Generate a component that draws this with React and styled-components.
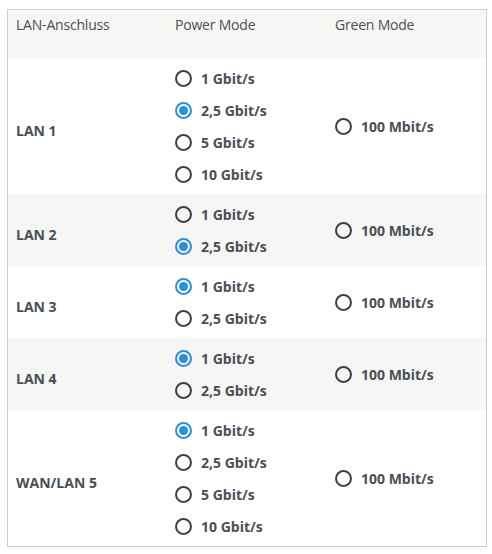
import React from 'react';
import styled, { createGlobalStyle } from 'styled-components';

const GlobalStyle = createGlobalStyle`
    body {
        margin: 0;
        background: #ffffff;
        font-family: "Open Sans", "Liberation Sans", sans-serif;
        color: #4a4f55;
    }
`;

const Page = styled.div`
    padding: 9px 5px 0 7px;
`;

const Table = styled.div`
    width: 478px;
    border: 1px solid #c3d0da;
`;

const Row = styled.div`
    display: grid;
    grid-template-columns: 159px 160px 1fr;
    align-items: center;
    padding: 4px 0 4px 8px;
    background: ${p => (p.$shaded ? '#f6f6f4' : '#ffffff')};
`;

const HeadRow = styled(Row)`
    align-items: start;
    height: 48px;
    box-sizing: border-box;
    padding-top: 5px;
`;

const HeadCell = styled.div`
    font-size: 14px;
    line-height: 20px;
    letter-spacing: -0.2px;
`;

const PortName = styled.div`
    font-size: 14px;
    font-weight: 700;
    padding-top: 8px;
`;

const Options = styled.div`
    display: flex;
    flex-direction: column;
`;

const Option = styled.label`
    display: flex;
    align-items: center;
    height: 32px;
    gap: 9px;
    font-size: 14px;
    font-weight: 700;
`;

const Radio = styled.span`
    width: 17px;
    height: 17px;
    box-sizing: border-box;
    border-radius: 50%;
    border: 2px solid ${p => (p.$on ? '#2b8ee0' : '#3c4045')};
    display: flex;
    align-items: center;
    justify-content: center;

    &::after {
        content: '';
        width: 9px;
        height: 9px;
        border-radius: 50%;
        background: ${p => (p.$on ? '#2b8ee0' : 'transparent')};
    }
`;

const ports = [
    { name: 'LAN 1', speeds: ['1 Gbit/s', '2,5 Gbit/s', '5 Gbit/s', '10 Gbit/s'], on: 1 },
    { name: 'LAN 2', speeds: ['1 Gbit/s', '2,5 Gbit/s'], on: 1 },
    { name: 'LAN 3', speeds: ['1 Gbit/s', '2,5 Gbit/s'], on: 0 },
    { name: 'LAN 4', speeds: ['1 Gbit/s', '2,5 Gbit/s'], on: 0 },
    { name: 'WAN/LAN 5', speeds: ['1 Gbit/s', '2,5 Gbit/s', '5 Gbit/s', '10 Gbit/s'], on: 0 },
];

export default function App() {
    return (
        <Page>
            <GlobalStyle />
            <Table>
                <HeadRow $shaded>
                    <HeadCell>LAN-Anschluss</HeadCell>
                    <HeadCell>Power Mode</HeadCell>
                    <HeadCell>Green Mode</HeadCell>
                </HeadRow>
                {ports.map((port, i) => (
                    <Row key={port.name} $shaded={i % 2 === 1}>
                        <PortName>{port.name}</PortName>
                        <Options>
                            {port.speeds.map((s, j) => (
                                <Option key={s}>
                                    <Radio $on={j === port.on} />
                                    {s}
                                </Option>
                            ))}
                        </Options>
                        <Option>
                            <Radio />
                            100 Mbit/s
                        </Option>
                    </Row>
                ))}
            </Table>
        </Page>
    );
}
